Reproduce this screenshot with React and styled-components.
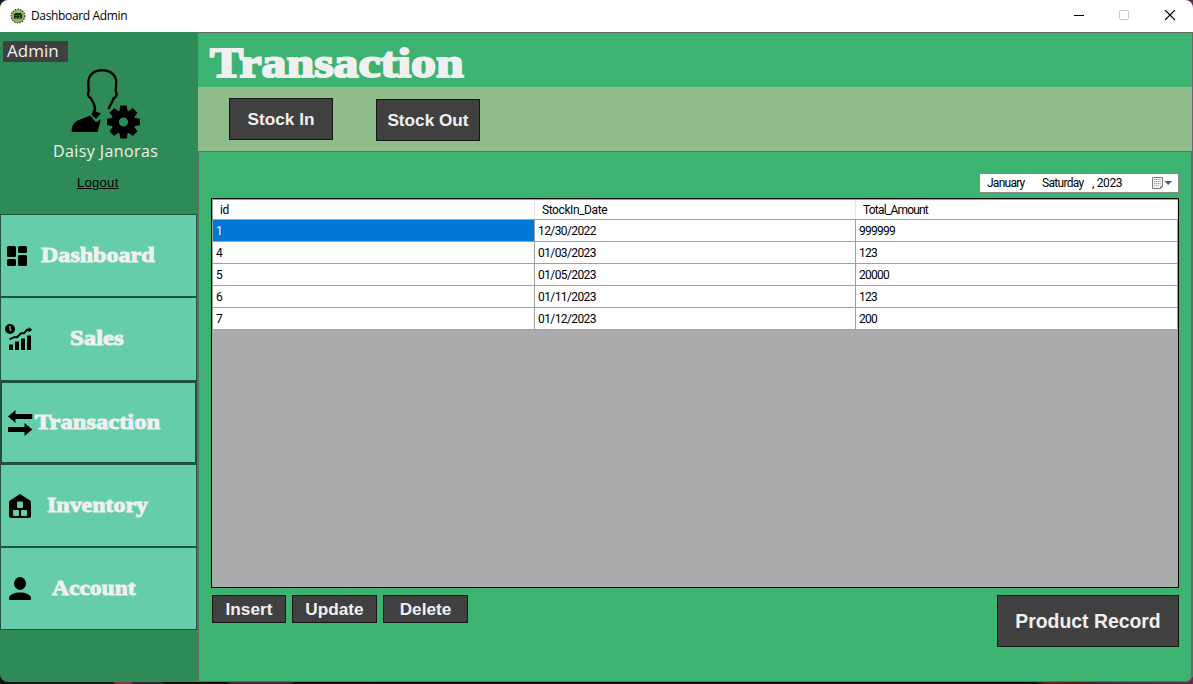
import React from 'react';
import styled, { createGlobalStyle } from 'styled-components';

const Global = createGlobalStyle`
  * { box-sizing: border-box; }
  body { margin: 0; background: #0c0c10; overflow: hidden; }
  button { font: inherit; margin: 0; padding: 0; border-radius: 0; }
  svg { display: block; flex: none; }
`;

const Desktop = styled.div`
  width: 1193px;
  height: 684px;
  background: linear-gradient(90deg, #10141a 0 112px, #8a3550 116px 130px, #32283a 134px 160px, #14060f 166px 225px, #4b2440 232px 290px, #200512 296px 360px, #0c0c10 380px 1035px, #5a2b18 1045px, #5a1c18 1075px, #43283f 1100px, #59304f 1193px);
`;

const Window = styled.div`
  height: 682px;
  display: flex;
  flex-direction: column;
  border-radius: 8px;
  overflow: hidden;
`;

const TitleBar = styled.header`
  height: 32px;
  flex: none;
  display: flex;
  align-items: center;
  padding-left: 10px;
  background: #fff;
  font: 12px/32px "Open Sans", sans-serif;
  color: #000;
`;

const WindowTitle = styled.span`
  flex: 1;
  margin-left: 5px;
  letter-spacing: -0.35px;
`;

const WindowControl = styled.div`
  width: 46px;
  display: flex;
  justify-content: center;
`;

const Body = styled.div`
  flex: 1;
  display: flex;
  min-height: 0;
`;

const Sidebar = styled.aside`
  width: 197px;
  flex: none;
  background: #2e8b57;
`;

const Profile = styled.div`
  height: 182px;
  display: flex;
  flex-direction: column;
  font-family: "Open Sans", sans-serif;
  color: #f0f0f0;
`;

const Role = styled.span`
  width: 65px;
  height: 21px;
  margin: 9px 0 0 3px;
  padding-left: 4px;
  background: #404040;
  font-size: 17px;
  line-height: 20px;
`;

const Avatar = styled.div`
  margin: 7px 0 0 71px;
`;

const UserName = styled.span`
  margin: 0 0 0 53px;
  font-size: 16px;
  line-height: 24px;
  letter-spacing: 0.4px;
  white-space: nowrap;
`;

const Logout = styled.a`
  margin: 12px 0 0 77px;
  font: 13px/15px "Liberation Sans", sans-serif;
  color: #000;
  letter-spacing: 0.3px;
  text-decoration: underline;
`;

const NavItem = styled.button`
  width: 197px;
  height: ${p => p.$h || 83}px;
  display: flex;
  align-items: center;
  border: ${p => (p.$active ? 2 : 1)}px solid #1d523e;
  padding-left: ${p => (p.$active ? 3 : 4)}px;
  padding-bottom: ${p => (p.$h ? 2 : 0)}px;
  background: #66cdaa;
  text-align: left;
`;

const NavLabel = styled.span`
  margin: 0 0 ${p => (p.$lift === undefined ? 2 : p.$lift)}px ${p => p.$gap}px;
  font: bold 21px/24px "Liberation Serif", serif;
  color: #f0f0f0;
  -webkit-text-stroke: 0.9px #f0f0f0;
  transform: scaleX(${p => p.$stretch || 1.15});
  transform-origin: left;
`;

const Main = styled.main`
  flex: 1;
  display: flex;
  flex-direction: column;
  background: #3cb371;
  min-width: 0;
`;

const Heading = styled.div`
  height: 55px;
  border: solid #696969;
  border-width: 1px 1px 0 1px;
  padding-left: 12px;
`;

const PageTitle = styled.h1`
  margin: 0;
  font: bold 43px/60px "Liberation Serif", serif;
  color: #f0f0f0;
  -webkit-text-stroke: 2px #f0f0f0;
  transform: scaleX(1.158);
  transform-origin: left;
  width: max-content;
`;

const Tabs = styled.div`
  height: 65px;
  display: flex;
  gap: 43px;
  padding: 11px 0 0 31px;
  background: #8fbc8b;
  border: solid #696969;
  border-width: 0 1px 1px 1px;
`;

const Button = styled.button`
  width: ${p => p.$w}px;
  height: ${p => p.$h}px;
  margin-top: ${p => p.$drop || 0}px;
  border: 1px solid #151515;
  background: #404040;
  color: #f0f0f0;
  font: bold ${p => p.$size || 17.2}px "Liberation Sans", sans-serif;
  white-space: nowrap;
`;

const Content = styled.section`
  flex: 1;
  display: flex;
  flex-direction: column;
  padding: 22px 12px 0 12px;
  border: solid #696969;
  border-width: 0 2px 1px 2px;
  border-radius: 0 0 7px 0;
  font: 12px "Roboto", sans-serif;
`;

const DatePicker = styled.div`
  align-self: flex-end;
  width: 200px;
  height: 20px;
  margin-top: -1px;
  display: flex;
  align-items: center;
  border: 1px solid #8b8b8b;
  padding-left: 7px;
  background: #fff;
`;

const DatePart = styled.span`
  width: ${p => p.$w}px;
  letter-spacing: ${p => p.$track}px;
  white-space: nowrap;
`;

const Grid = styled.div`
  height: 390px;
  margin-top: 5px;
  border: 1px solid #000;
  background: #ababab;
`;

const Row = styled.div`
  display: grid;
  grid-template-columns: 322px 321px 322px;
  height: ${p => (p.$head ? 21 : 22)}px;
  color: #000;
  background: #fff;
  border-top: ${p => (p.$head ? '1px solid #a0a0a0' : '0')};
  border-bottom: 1px solid #a0a0a0;
  border-left: 1px solid #a0a0a0;
`;

const Cell = styled.div`
  padding: 2px 0 0 3px;
  line-height: 19px;
  letter-spacing: ${p => p.$track}px;
  border-right: 1px solid #a0a0a0;
  background: ${p => (p.$selected ? '#0078d7' : '#fff')};
  color: ${p => (p.$selected ? '#fff' : '#000')};
`;

const HeadCell = styled(Cell)`
  padding: 1px 0 0 7px;
  line-height: 18px;
  border-right-color: #e5e5e5;
`;

const Actions = styled.div`
  display: flex;
  gap: 6px;
  padding: 7px 0 0 1px;
`;

const Spacer = styled.div`
  flex: 1;
`;

const AppIcon = () => (
  <svg width="16" height="16" viewBox="0 0 16 16">
    <circle cx="8" cy="8" r="6.800" fill="#8cb85c" stroke="#26351a" strokeWidth="1.200" strokeDasharray="1.400 1.200" />
    <path d="M4 10.500V6.500L5.500 5h5l1.500 1.500v4z" fill="#17200f" />
    <path d="M5.300 7.500h1.500M9 6.500v1.500h1.500M5.500 9.500h1.200M9 9.500h1.500" fill="none" stroke="#8cb85c" strokeWidth=".7" />
  </svg>
);

const AdminIcon = () => (
  <svg width="70" height="70" viewBox="0 0 70 70">
    <path d="M24 43C24.300 39 24 37 22.700 34.500L19.700 29C16.800 28 16.300 24 17.700 22.500L17.300 14C17.300 6.500 22 1.300 31 1.300S45.700 6.500 45.200 14L44.800 22.500C46.300 24 45.800 28 43 29L40.500 34L37.500 40" fill="none" stroke="#000" strokeWidth="2.400" />
    <path d="M.7 63C.7 57 2.500 53 8 51L19 46.500L25 53.300L30 50L26.600 63z" />
    <path d="M22.500 40.500L25.500 43L30 44.300L25 50L20.500 46z" />
    <g transform="translate(52.500 53)">
      <circle r="8.300" fill="none" stroke="#000" strokeWidth="7.400" />
      {[0, 45, 90, 135, 180, 225, 270, 315].map(a => (
        <path key={a} d="M-4.200-10L-3.300-16.500H3.300L4.200-10z" transform={`rotate(${a})`} />
      ))}
    </g>
  </svg>
);

const DashboardIcon = () => (
  <svg width="28" height="28" viewBox="0 0 28 28">
    <rect x="2" y="4" width="9" height="11" rx="1.500" />
    <rect x="2" y="17" width="9" height="7" rx="1.500" />
    <rect x="13" y="4" width="9" height="7" rx="1.500" />
    <rect x="13" y="13" width="9" height="11" rx="1.500" />
  </svg>
);

const SalesIcon = () => (
  <svg width="28" height="28" viewBox="0 0 28 28">
    <circle cx="5" cy="5" r="5" />
    <path d="M5 2v3.500l1.500 1.200" fill="none" stroke="#66cdaa" strokeWidth="1.300" />
    <path d="M4 20.500h4V26H4zM10 17.500h4V26h-4zM16 14.500h4V26h-4zM22 11.500h4V26h-4z" />
    <path d="M4.500 15.300L9 13.200H12L16 9.300H19L22 5.800H25.500" fill="none" stroke="#000" strokeWidth="2" />
    <path d="M23.500 3L27.300 5.800L23.500 8.500z" />
  </svg>
);

const TransferIcon = () => (
  <svg width="28" height="28" viewBox="0 0 28 28">
    <path d="M3 7.500L10.500 1V5H27.300V10H10.500V14z" />
    <path d="M27.300 20.500L19.500 14V18H3V23H19.500V27z" />
  </svg>
);

const InventoryIcon = () => (
  <svg width="28" height="28" viewBox="0 0 28 28">
    <path d="M15 2L25 8.500Q26 9.300 26 11V23.500Q26 26 23.500 26H6.500Q4 26 4 23.500V11Q4 9.300 5 8.500z" />
    <g fill="#66cdaa">
      <rect x="12" y="9.500" width="6" height="6.500" rx="1" />
      <rect x="8" y="18" width="6" height="6" rx="1" />
      <rect x="16" y="18" width="6" height="6" rx="1" />
    </g>
  </svg>
);

const AccountIcon = () => (
  <svg width="28" height="28" viewBox="0 0 28 28">
    <ellipse cx="15" cy="8.500" rx="6" ry="6.500" />
    <path d="M4 24.300V23C4 19.500 10 17.500 15 17.500S26 19.500 26 23V24.300Q26 25 25 25H5Q4 25 4 24.300z" />
  </svg>
);

const CalendarIcon = () => (
  <svg width="24" height="16" viewBox="0 0 24 16">
    <path d="M1.500 2.500h10v9l-2 2h-8z" fill="#f2f4f8" stroke="#847b7b" />
    <path d="M3 4.500h7M3 6.500h7M3 8.500h7M3 10.500h5" stroke="#9aa4bb" strokeDasharray="1.200 .6" />
    <path d="M11.500 11.500h-2v2" fill="none" stroke="#847b7b" />
    <path d="M13.500 6h7.500l-3.750 4z" fill="#46598c" />
  </svg>
);

const nav = [
  { label: 'Dashboard', Icon: DashboardIcon, gap: 8, stretch: 1.145 },
  { label: 'Sales', Icon: SalesIcon, gap: 37, h: 84, lift: 0, stretch: 1.18 },
  { label: 'Transaction', Icon: TransferIcon, gap: 2, active: true, stretch: 1.17 },
  { label: 'Inventory', Icon: InventoryIcon, gap: 14, stretch: 1.14 },
  { label: 'Account', Icon: AccountIcon, gap: 19, stretch: 1.12 },
];

const columns = [
  { name: 'id', headTrack: -0.3, track: -0.6 },
  { name: 'StockIn_Date', headTrack: -0.42, track: -0.6 },
  { name: 'Total_Amount', headTrack: -0.8, track: -0.75 },
];

const rows = [
  ['1', '12/30/2022', '999999'],
  ['4', '01/03/2023', '123'],
  ['5', '01/05/2023', '20000'],
  ['6', '01/11/2023', '123'],
  ['7', '01/12/2023', '200'],
];

export default function App() {
  return (
    <Desktop>
      <Global />
      <Window>
        <TitleBar>
          <AppIcon />
          <WindowTitle>Dashboard Admin</WindowTitle>
          <WindowControl>
            <svg width="12" height="12"><path d="M2 5.500h10" stroke="#000" /></svg>
          </WindowControl>
          <WindowControl>
            <svg width="12" height="12"><rect x="1.500" y=".5" width="9" height="9" rx="1" fill="none" stroke="#c8c8c8" /></svg>
          </WindowControl>
          <WindowControl>
            <svg width="12" height="12"><path d="M1 0l10 10M11 0L1 10" stroke="#000" strokeWidth="1.100" /></svg>
          </WindowControl>
        </TitleBar>
        <Body>
          <Sidebar>
            <Profile>
              <Role>Admin</Role>
              <Avatar><AdminIcon /></Avatar>
              <UserName>Daisy Janoras</UserName>
              <Logout>Logout</Logout>
            </Profile>
            {nav.map(({ label, Icon, gap, active, h, lift, stretch }) => (
              <NavItem key={label} $active={active} $h={h}>
                <Icon />
                <NavLabel $gap={gap} $lift={lift} $stretch={stretch}>{label}</NavLabel>
              </NavItem>
            ))}
          </Sidebar>
          <Main>
            <Heading><PageTitle>Transaction</PageTitle></Heading>
            <Tabs>
              <Button $w={104} $h={42}>Stock In</Button>
              <Button $w={104} $h={42} $drop={1}>Stock Out</Button>
            </Tabs>
            <Content>
              <DatePicker>
                <DatePart $w={55} $track={-0.75}>January</DatePart>
                <DatePart $w={50} $track={-0.7}>Saturday</DatePart>
                <DatePart $w={59} $track={-0.35}>, 2023</DatePart>
                <CalendarIcon />
              </DatePicker>
              <Grid>
                <Row $head>
                  {columns.map(c => <HeadCell key={c.name} $track={c.headTrack}>{c.name}</HeadCell>)}
                </Row>
                {rows.map((r, i) => (
                  <Row key={r[0]}>
                    {r.map((v, j) => (
                      <Cell key={j} $track={columns[j].track} $selected={i === 0 && j === 0}>{v}</Cell>
                    ))}
                  </Row>
                ))}
              </Grid>
              <Actions>
                <Button $w={74} $h={28}>Insert</Button>
                <Button $w={85} $h={28}>Update</Button>
                <Button $w={85} $h={28}>Delete</Button>
                <Spacer />
                <Button $w={182} $h={52} $size={19.4}>Product Record</Button>
              </Actions>
            </Content>
          </Main>
        </Body>
      </Window>
    </Desktop>
  );
}
